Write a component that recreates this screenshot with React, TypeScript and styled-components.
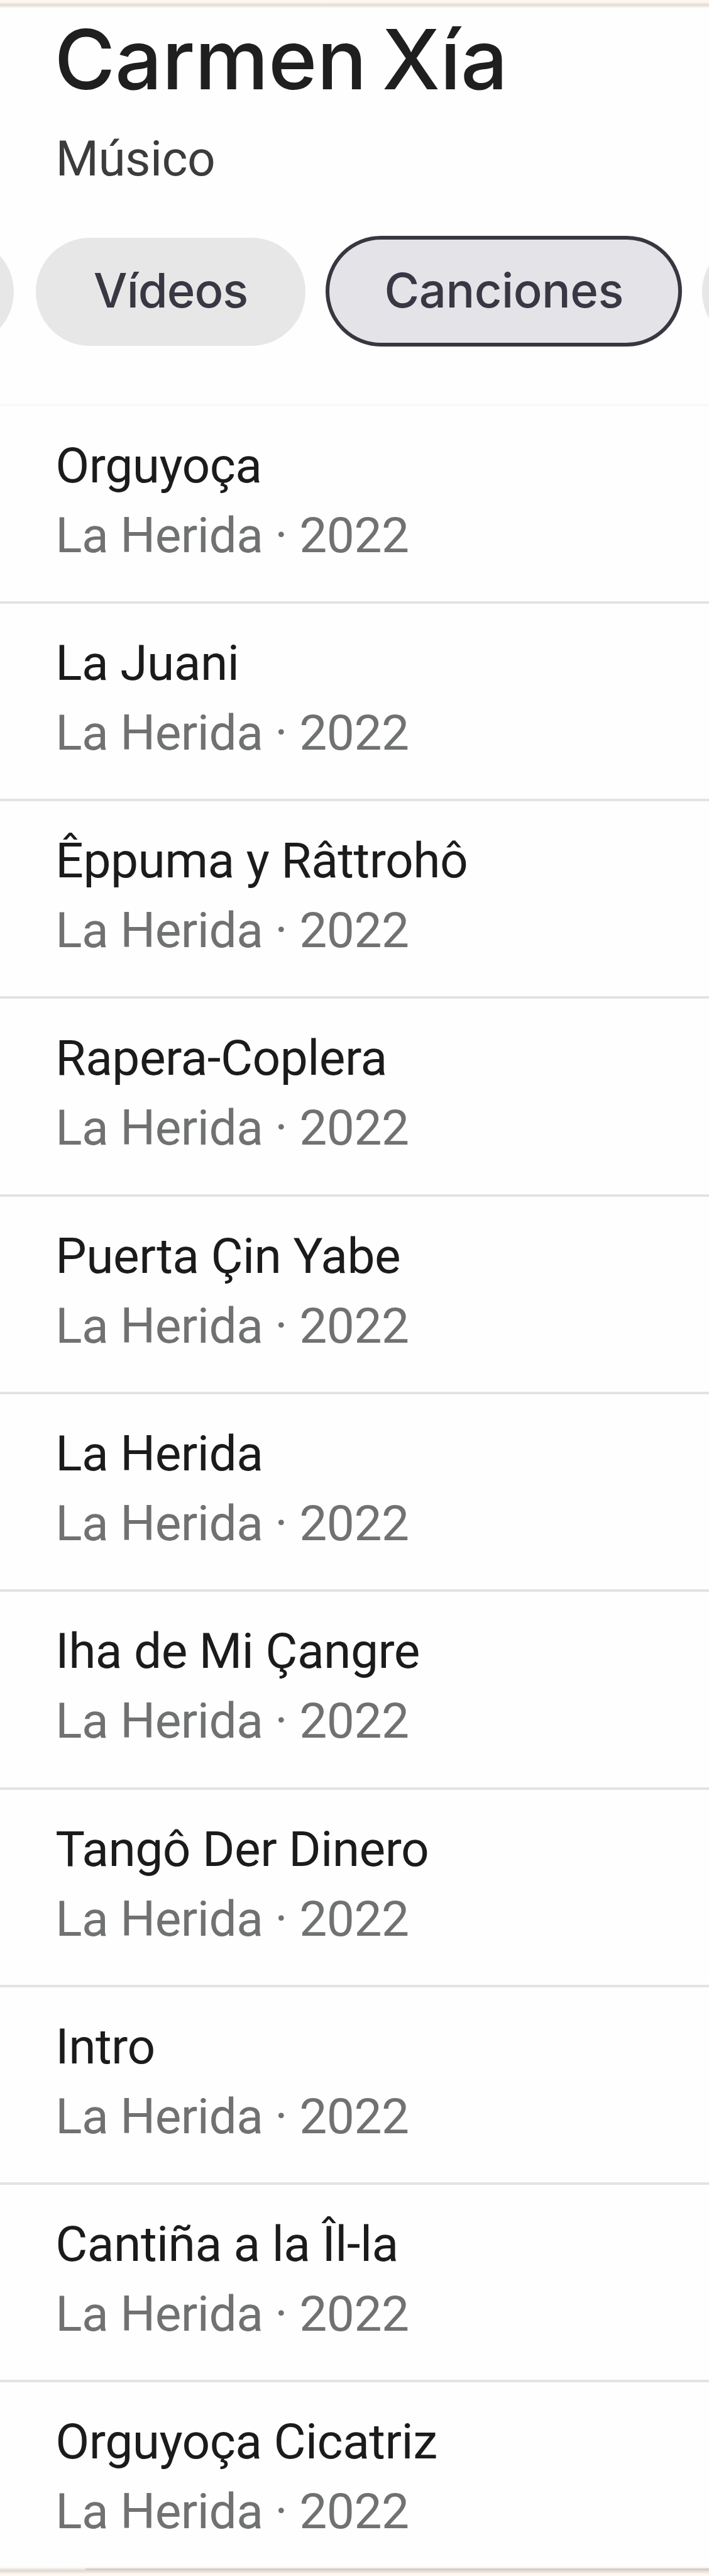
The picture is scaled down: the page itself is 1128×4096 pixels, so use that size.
import styled, { createGlobalStyle } from "styled-components";

const songs = [
	"Orguyoça",
	"La Juani",
	"Êppuma y Râttrohô",
	"Rapera-Coplera",
	"Puerta Çin Yabe",
	"La Herida",
	"Iha de Mi Çangre",
	"Tangô Der Dinero",
	"Intro",
	"Cantiña a la Îl-la",
	"Orguyoça Cicatriz",
];

const GlobalStyle = createGlobalStyle`
	* {
		box-sizing: border-box;
	}

	body {
		margin: 0;
		background: #fefefe;
	}
`;

const Page = styled.div`
	width: 1128px;
	height: 4096px;
	overflow: hidden;
	display: flex;
	flex-direction: column;
	background: #fefefe;
	font-family: Roboto, sans-serif;
`;

const TopEdge = styled.div`
	flex: none;
	height: 13px;
	background: linear-gradient(
		#fff8f0 0,
		#fdf5ee 4px,
		#e5dfda 7px,
		#e5dfda 9px,
		#fdf9f5 12px,
		#fefdfb 13px
	);
`;

const Header = styled.header`
	flex: none;
	padding-left: 88.5px;
`;

const Name = styled.h1`
	margin: 0 0 0 -2px;
	font-family: Inter, sans-serif;
	font-size: 132px;
	font-weight: 500;
	line-height: 163px;
	letter-spacing: -0.3px;
	word-spacing: -10.5px;
	color: #1f1f1f;
	white-space: nowrap;
`;

const Role = styled.p`
	margin: 30px 0 0;
	font-size: 78.5px;
	line-height: 92px;
	letter-spacing: -0.6px;
	color: #3c3c3c;
`;

const Chips = styled.nav`
	flex: none;
	display: flex;
	align-items: flex-end;
	gap: 35.2px;
	height: 253px;
	margin-left: -278.4px;
`;

const Chip = styled.div<{ $width: number; $spacing?: number }>`
	flex: none;
	display: flex;
	align-items: center;
	justify-content: center;
	width: ${(props) => props.$width}px;
	height: 172px;
	margin-bottom: 1px;
	padding-bottom: 6px;
	border-radius: 86px;
	background: #e7e7e7;
	color: #3a3744;
	font-family: Inter, sans-serif;
	font-size: 76px;
	font-weight: 500;
	line-height: 92px;
	letter-spacing: ${(props) => props.$spacing || 0}px;
`;

const ActiveChip = styled(Chip)`
	height: 176px;
	margin: 0 -3px;
	padding-bottom: 4px;
	border: 6px solid #38363f;
	border-radius: 88px;
	background: #e4e3e8;
`;

const List = styled.ul`
	flex: 1;
	display: flex;
	flex-direction: column;
	margin: 90.7px 0 0;
	padding: 0;
	border-top: 4px solid #f9f9f9;
	list-style: none;
`;

const Song = styled.li`
	flex: none;
	height: 314.27px;
	padding: 48px 0 0 88.3px;
	border-bottom: 4px solid #e3e3e3;
	font-size: 78.5px;
	line-height: 92px;
	letter-spacing: -0.52px;
	white-space: nowrap;

	&:last-child {
		flex: 1;
		border-bottom: 0;
	}
`;

const Title = styled.div`
	color: #1b1b1b;
`;

const Album = styled.div`
	margin-top: 19px;
	color: #707171;
`;

const BottomEdge = styled.div`
	flex: none;
	display: flex;
	height: 16px;

	&:before {
		content: "";
		width: 136px;
		background: linear-gradient(
			#fefefd 0,
			#fdf9f5 3px,
			#e6ddd8 6px,
			#e5dcd8 9px,
			#fbf4ee 12px,
			#fffbf3 16px
		);
	}

	&:after {
		content: "";
		flex: 1;
		background: linear-gradient(
			#fefefd 0,
			#f8f5f0 3px,
			#cfcabf 5px,
			#d3cdc4 6px,
			#e6ddd8 8px,
			#f6ebe6 11px,
			#fff9f0 13px,
			#fffbf3 16px
		);
	}
`;

const App = () => (
	<>
		<GlobalStyle />
		<Page>
			<TopEdge />
			<Header>
				<Name>Carmen Xía</Name>
				<Role>Músico</Role>
			</Header>
			<Chips>
				<Chip $width={300} />
				<Chip $width={429.5} $spacing={-1}>
					Vídeos
				</Chip>
				<ActiveChip $width={566.5} $spacing={-0.5}>
					Canciones
				</ActiveChip>
				<Chip $width={300} />
			</Chips>
			<List>
				{songs.map((song) => (
					<Song key={song}>
						<Title>{song}</Title>
						<Album>La Herida · 2022</Album>
					</Song>
				))}
			</List>
			<BottomEdge />
		</Page>
	</>
);

export default App;
